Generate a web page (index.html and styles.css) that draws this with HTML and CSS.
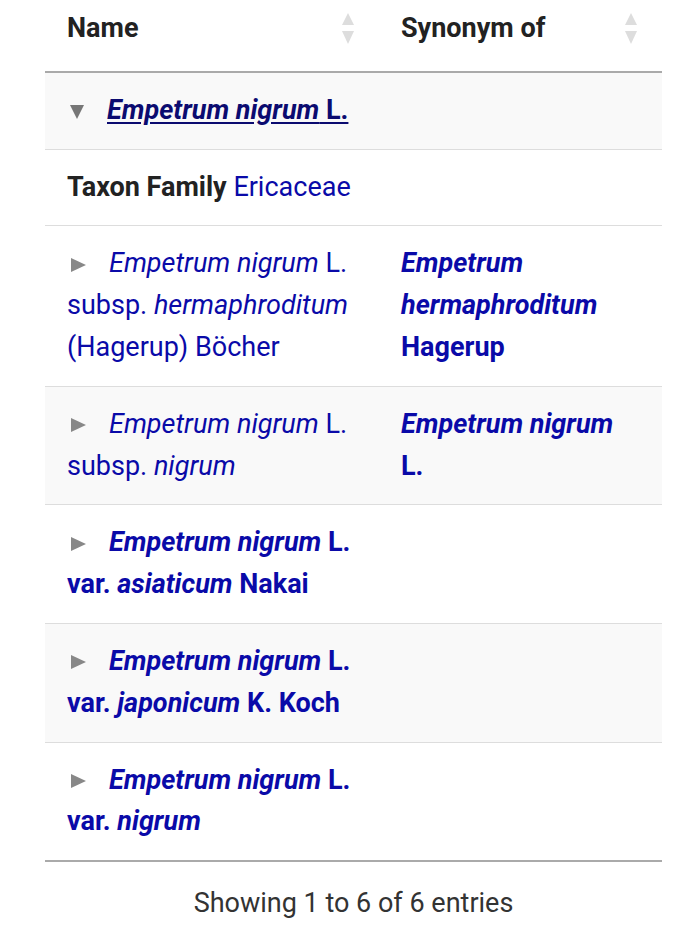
FILE: index.html
```html
<!DOCTYPE html>
<html>
<head>
<meta charset="utf-8">
<link rel="stylesheet" href="styles.css">
</head>
<body>
<div class="wrap">
  <table class="tbl">
    <thead>
      <tr>
        <th class="c1"><span>Name</span><span class="sort"><i class="up"></i><i class="down"></i></span></th>
        <th class="c2"><span>Synonym of</span><span class="sort"><i class="up"></i><i class="down"></i></span></th>
      </tr>
    </thead>
    <tbody>
      <tr class="odd">
        <td colspan="2"><span class="tri open"></span><a class="visited"><b><i>Empetrum nigrum</i> L.</b></a></td>
      </tr>
      <tr>
        <td colspan="2"><b class="lbl">Taxon Family</b> <a>Ericaceae</a></td>
      </tr>
      <tr>
        <td class="c1"><span class="tri"></span><a><i>Empetrum nigrum</i> L. subsp. <i>hermaphroditum</i> (Hagerup) Böcher</a></td>
        <td class="c2"><a><b><i>Empetrum hermaphroditum</i> Hagerup</b></a></td>
      </tr>
      <tr class="odd">
        <td class="c1"><span class="tri"></span><a><i>Empetrum nigrum</i> L. subsp. <i>nigrum</i></a></td>
        <td class="c2"><a><b><i>Empetrum nigrum</i> L.</b></a></td>
      </tr>
      <tr>
        <td class="c1"><span class="tri"></span><a><b><i>Empetrum nigrum</i> L. var. <i>asiaticum</i> Nakai</b></a></td>
        <td class="c2"></td>
      </tr>
      <tr class="odd">
        <td class="c1"><span class="tri"></span><a><b><i>Empetrum nigrum</i> L. var. <i>japonicum</i> K. Koch</b></a></td>
        <td class="c2"></td>
      </tr>
      <tr class="last">
        <td class="c1"><span class="tri"></span><a><b><i>Empetrum nigrum</i> L. var. <i>nigrum</i></b></a></td>
        <td class="c2"></td>
      </tr>
    </tbody>
  </table>
  <div class="info">Showing 1 to 6 of 6 entries</div>
</div>
</body>
</html>
```
FILE: styles.css
```css
html, body {
  margin: 0;
  padding: 0;
  background: #fff;
}
body {
  font-family: Roboto, "Liberation Sans", sans-serif;
  font-size: 27px;
  line-height: 41.8px;
  color: #222;
}
.wrap {
  padding: 0 28px 0 45px;
}
.tbl {
  width: 617px;
  border-collapse: collapse;
  table-layout: fixed;
}
.tbl th {
  text-align: left;
  font-weight: 700;
  padding: 8px 22px 21px 22px;
  border-bottom: 2px solid #aaa;
  vertical-align: top;
  position: relative;
}
.tbl th.c1 { width: 290px; }
.sort {
  position: absolute;
  right: 25px;
  top: 13px;
  width: 12px;
  height: 32px;
}
.sort i {
  position: absolute;
  left: 0;
  width: 0;
  height: 0;
  border-left: 6px solid transparent;
  border-right: 6px solid transparent;
}
.sort .up {
  top: 0;
  border-bottom: 12px solid #ddd;
}
.sort .down {
  top: 18px;
  border-top: 13px solid #ddd;
}
.tbl td {
  padding: 17px 22px;
  border-top: 1px solid #ddd;
  vertical-align: top;
}
.tbl thead + tbody tr:first-child td { border-top: none; }
.tbl tr.odd td { background: #f9f9f9; }
.tbl tr.last td { border-bottom: 2px solid #aaa; }
a {
  color: #0a0aa8;
  text-decoration: none;
}
a.visited {
  color: #0b0b70;
  text-decoration: underline;
  text-underline-offset: 3px;
}
.tri {
  display: inline-block;
  width: 0;
  height: 0;
  margin: 0 23px 1px 4px;
  border-top: 7px solid transparent;
  border-bottom: 7px solid transparent;
  border-left: 15px solid #888;
  vertical-align: middle;
}
.tri.open {
  margin: 0 23px 0 3px;
  border-left: 7.5px solid transparent;
  border-right: 7.5px solid transparent;
  border-top: 14px solid #777;
  border-bottom: 0;
}
.lbl { color: #222; }
.info {
  width: 617px;
  text-align: center;
  color: #333;
  padding-top: 21px;
}
```
